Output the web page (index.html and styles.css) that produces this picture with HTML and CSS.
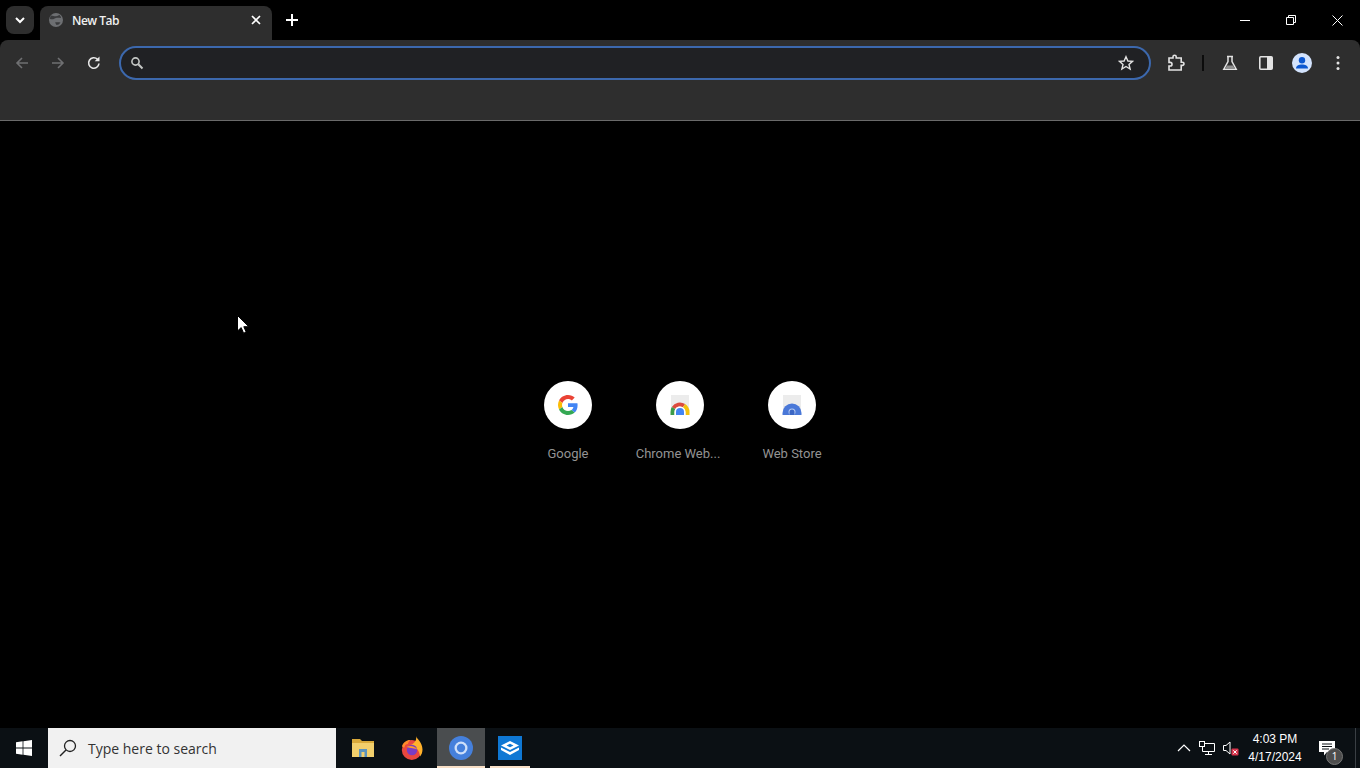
FILE: index.html
```html
<!DOCTYPE html>
<html lang="en">

<head>
  <meta charset="UTF-8">
  <title>New Tab</title>
  <link rel="stylesheet" href="styles.css">
</head>

<body>
  <!-- tab strip -->
  <div class="tabstrip">
    <button class="tab-search">
      <svg width="12" height="12" viewBox="0 0 12 12"><path d="M2 4l4 4 4-4" fill="none" stroke="#fff" stroke-width="2"/></svg>
    </button>
    <div class="tab">
      <svg class="tab-icon" width="16" height="16" viewBox="0 0 16 16">
        <circle cx="8" cy="8" r="7" fill="#6d6f72"/>
        <path d="M3 3.500c2 .2 3.500 1 5 .8s2.500-1 3.500-1.300c1 .8 1.500 2 1.500 3-2 0-3.500-.5-5 0S5 8 2 7c0-1.500.3-2.500 1-3.500zM7 10.500c1.500-.5 3.500-.5 5.500 0-1 1.700-2.500 2.500-4 2.500-.5-1-1-1.700-1.500-2.500z" fill="#3a3b3d"/>
      </svg>
      <span class="tab-title">New Tab</span>
      <svg class="tab-close" width="10" height="10" viewBox="0 0 10 10"><path d="M1 1l8 8M9 1L1 9" stroke="#fff" stroke-width="1.700"/></svg>
    </div>
    <button class="new-tab">
      <svg width="12" height="12" viewBox="0 0 12 12"><path d="M6 0v12M0 6h12" stroke="#fff" stroke-width="2"/></svg>
    </button>
    <div class="window-controls">
      <div class="win-btn"><svg width="10" height="10" viewBox="0 0 10 10"><path d="M0 5.500h10" stroke="#fff"/></svg></div>
      <div class="win-btn"><svg width="10" height="10" viewBox="0 0 10 10"><path d="M.5 2.500h7v7h-7zM2.500 2.500V.5h7v7h-2" fill="none" stroke="#fff"/></svg></div>
      <div class="win-btn"><svg width="11" height="11" viewBox="0 0 11 11"><path d="M.5.5l10 10M10.500.5l-10 10" stroke="#fff"/></svg></div>
    </div>
  </div>

  <!-- toolbar -->
  <div class="toolbar">
    <div class="toolbar-row">
      <div class="tool">
        <svg width="16" height="16" viewBox="0 0 16 16"><path d="M14 8H3M8 3L3 8l5 5" fill="none" stroke="#6f7072" stroke-width="1.600"/></svg>
      </div>
      <div class="tool">
        <svg width="16" height="16" viewBox="0 0 16 16"><path d="M2 8h11M8 3l5 5-5 5" fill="none" stroke="#6f7072" stroke-width="1.600"/></svg>
      </div>
      <div class="tool">
        <svg width="16" height="16" viewBox="0 0 16 16"><path d="M13 8.500A5.200 5.200 0 1 1 11.500 4.300" fill="none" stroke="#e8e8e8" stroke-width="1.600"/><path d="M13.500 1.500v4.800H8.700z" fill="#e8e8e8"/></svg>
      </div>
      <div class="omnibox">
        <svg class="omni-search" width="14" height="14" viewBox="0 0 14 14"><circle cx="5.500" cy="5.500" r="3.600" fill="none" stroke="#c4c7c5" stroke-width="1.600"/><path d="M8.300 8.300l4.200 4.200" stroke="#c4c7c5" stroke-width="2"/></svg>
        <svg class="omni-star" width="16" height="16" viewBox="0 0 16 16"><path d="M8 1.700l1.900 4.300 4.600.4-3.500 3 1.100 4.600-4.100-2.500-4.100 2.500L5 9.400l-3.500-3 4.600-.4z" fill="none" stroke="#e3e3e3" stroke-width="1.400"/></svg>
      </div>
      <div class="tool tool-ext">
        <svg width="18" height="18" viewBox="0 0 18 18"><path d="M2 4h4V2.800a1.600 1.600 0 0 1 3.200 0V4h5v4.200h1.200a1.600 1.600 0 0 1 0 3.200h-1.200V16H2v-4h1.200a1.800 1.800 0 0 0 0-3.600H2z" fill="none" stroke="#e3e3e3" stroke-width="1.600"/></svg>
      </div>
      <div class="tool-divider"></div>
      <div class="tool tool-flask">
        <svg width="16" height="16" viewBox="0 0 16 16"><path d="M5 1.500h6M6 1.500v5L1.800 14.200h12.400L10 6.500v-5" fill="none" stroke="#e3e3e3" stroke-width="1.500"/><path d="M5 10.500h6l2 3.500H3z" fill="#8f8f8f"/></svg>
      </div>
      <div class="tool">
        <svg width="16" height="16" viewBox="0 0 16 16"><rect x="1.800" y="1.800" width="12.400" height="12.400" rx="1" fill="none" stroke="#e3e3e3" stroke-width="1.600"/><rect x="9" y="2" width="5" height="12" fill="#e3e3e3"/></svg>
      </div>
      <div class="tool">
        <svg width="20" height="20" viewBox="0 0 20 20"><circle cx="10" cy="10" r="10" fill="#d3e3fd"/><circle cx="10" cy="7.300" r="3.200" fill="#0b57d0"/><path d="M4 15.500c0-2.700 2.700-4 6-4s6 1.300 6 4z" fill="#0b57d0"/></svg>
      </div>
      <div class="tool">
        <svg width="4" height="16" viewBox="0 0 4 16"><circle cx="2" cy="2.500" r="1.500" fill="#e3e3e3"/><circle cx="2" cy="8" r="1.500" fill="#e3e3e3"/><circle cx="2" cy="13.500" r="1.500" fill="#e3e3e3"/></svg>
      </div>
    </div>
  </div>

  <!-- new tab page -->
  <div class="page">
    <div class="shortcuts">
      <div class="shortcut">
        <div class="shortcut-icon">
          <svg width="20" height="20" viewBox="0 0 48 48">
            <path fill="#EA4335" d="M24 9.500c3.500 0 6.700 1.200 9.200 3.600l6.900-6.900C35.900 2.400 30.500 0 24 0 14.600 0 6.500 5.400 2.600 13.200l8 6.200C12.500 13.700 17.800 9.500 24 9.500z"/>
            <path fill="#4285F4" d="M47 24.500c0-1.600-.1-3.100-.4-4.500H24v9h12.900c-.6 3-2.200 5.500-4.700 7.200l7.700 6C44.400 38 47 31.900 47 24.500z"/>
            <path fill="#FBBC05" d="M10.500 28.600c-.5-1.400-.8-3-.8-4.600s.3-3.200.8-4.600l-8-6.200C1 16.400 0 20.100 0 24s1 7.600 2.600 10.800z"/>
            <path fill="#34A853" d="M24 48c6.500 0 11.900-2.100 15.900-5.800l-7.700-6c-2.200 1.500-5 2.300-8.200 2.300-6.300 0-11.500-4.200-13.500-9.900l-8 6.200C6.500 42.600 14.600 48 24 48z"/>
          </svg>
        </div>
        <span class="shortcut-label">Google</span>
      </div>
      <div class="shortcut">
        <div class="shortcut-icon">
          <svg width="20" height="20" viewBox="0 0 20 20">
            <rect x="1" y="0" width="18" height="20" fill="#ececec"/>
            <g fill="none" stroke-width="4">
              <path d="M3.500 13A7.500 7.500 0 0 1 14 10.700" stroke="#dd4b3e"/>
              <path d="M14 10.700A7.500 7.500 0 0 1 17.500 17v3" stroke="#f4c20d"/>
              <path d="M2.500 20v-3a7.500 7.500 0 0 1 1-4" stroke="#3c9b4a"/>
            </g>
            <path d="M4.500 20v-3a5.500 5.500 0 0 1 11 0v3z" fill="#fff"/>
            <path d="M6 20v-3a4 4 0 0 1 8 0v3z" fill="#4285f4"/>
          </svg>
        </div>
        <span class="shortcut-label shortcut-label-cut">Chrome Web...</span>
      </div>
      <div class="shortcut">
        <div class="shortcut-icon">
          <svg width="20" height="20" viewBox="0 0 20 20">
            <rect x="1" y="0" width="18" height="20" fill="#ececec"/>
            <path d="M.5 20v-2a9.500 9.500 0 0 1 19 0v2z" fill="#4a78d8"/>
            <circle cx="10" cy="17" r="3.500" fill="#b9cdf3"/>
            <path d="M7.500 20v-3a2.500 2.500 0 0 1 5 0v3z" fill="#3b66c4"/>
          </svg>
        </div>
        <span class="shortcut-label">Web Store</span>
      </div>
    </div>

    <svg class="cursor" width="12" height="19" viewBox="0 0 12 19"><path d="M.5.500v15.500l3.700-3.400 2.400 5.600 2.600-1.100-2.400-5.400h5z" fill="#fff" stroke="#000"/></svg>
  </div>

  <!-- windows taskbar -->
  <div class="taskbar">
    <div class="start">
      <svg width="16" height="16" viewBox="0 0 16 16"><path d="M0 2.200l6.600-.9v6.300H0zM7.400 1.200L16 0v7.600H7.400zM0 8.400h6.600v6.300L0 13.800zM7.400 8.400H16V16l-8.600-1.200z" fill="#fff"/></svg>
    </div>
    <div class="searchbox">
      <svg width="18" height="18" viewBox="0 0 18 18"><circle cx="11" cy="7" r="5.500" fill="none" stroke="#222" stroke-width="1.300"/><path d="M7 11l-6 6" stroke="#222" stroke-width="1.500"/></svg>
      <span>Type here to search</span>
    </div>
    <div class="apps">
      <div class="app">
        <svg width="22" height="20" viewBox="0 0 22 20"><path d="M0 1h8l2 2h12v15H0z" fill="#d9a93a"/><path d="M0 5h22v14H0z" fill="#f2cf6c"/><path d="M7 11h8v8H7z" fill="#5b93bd"/><path d="M9.500 14h3v5h-3z" fill="#f2cf6c"/></svg>
      </div>
      <div class="app">
        <svg width="24" height="24" viewBox="0 0 24 24">
          <circle cx="11.800" cy="14" r="10" fill="#e9473f"/>
          <path d="M16 0c.5 3 6.500 6 6.500 13.500 0 3-1 5-2.500 7-.5-6-4-10.500-9.500-11.500 3.500-1.500 6.500-4 5.500-9z" fill="#ffb12b"/>
          <path d="M2 10c1.500-4 5-6.500 9-6-2 1-3 2.500-3 4-2 0-3.500 1-3.500 3.500C3.500 11.500 2.500 11 2 10z" fill="#ff8a2a"/>
          <circle cx="12" cy="14" r="5.200" fill="#7a3cc4"/>
          <path d="M6.500 11c3.500-2 8.500-1 11 2.500-2.500-1.200-7-1.200-11-2.500z" fill="#ff9a2a"/>
        </svg>
      </div>
      <div class="app app-active">
        <svg width="24" height="24" viewBox="0 0 24 24"><circle cx="12" cy="12" r="12" fill="#4580dc"/><circle cx="12" cy="12" r="6.500" fill="#cfe0fa"/><circle cx="12" cy="12" r="4.200" fill="#4580dc"/></svg>
      </div>
      <div class="app app-open">
        <div class="store-tile">
          <svg width="18" height="14" viewBox="0 0 18 14"><path d="M9 0l9 4.500L9 9 0 4.500z" fill="#fff"/><path d="M0 6.500l9 4.500 9-4.500V9l-9 5-9-5z" fill="#fff"/><path d="M5.500 4.500L9 2.800l3.500 1.700L9 6.200z" fill="#0f78d4"/></svg>
        </div>
      </div>
    </div>
    <div class="tray">
      <svg width="14" height="8" viewBox="0 0 14 8"><path d="M1 7l6-6 6 6" fill="none" stroke="#fff" stroke-width="1.200"/></svg>
      <svg width="16" height="14" viewBox="0 0 16 14"><path d="M3.500 2.500h12v8h-12zM6 13.500h7M9.500 10.500v3" fill="none" stroke="#fff"/><rect x=".5" y=".5" width="5" height="5" fill="#0b1014" stroke="#fff"/></svg>
      <svg width="16" height="16" viewBox="0 0 16 16"><path d="M.5 5.500h2.500L7 2v12l-4-3.500H.5z" fill="none" stroke="#fff"/><rect x="8.500" y="8.500" width="7" height="7" rx="1" fill="#d8344c"/><path d="M10.300 10.300l3.400 3.400M13.700 10.300l-3.400 3.400" stroke="#fff"/></svg>
      <div class="clock">
        <span>4:03 PM</span>
        <span>4/17/2024</span>
      </div>
      <div class="notify">
        <svg width="16" height="15" viewBox="0 0 16 15"><path d="M0 0h16v11H8l-3 3.500V11H0z" fill="#fff"/><path d="M3 3h10M3 5.500h10M3 8h7" stroke="#0b1014"/></svg>
        <span class="notify-badge">1</span>
      </div>
      <div class="show-desktop"></div>
    </div>
  </div>
</body>

</html>
```

FILE: styles.css
```css
* {
  margin: 0;
  padding: 0;
  box-sizing: border-box;
}

body {
  display: flex;
  flex-direction: column;
  width: 1360px;
  height: 768px;
  overflow: hidden;
  background-color: #000;
  font-family: "Open Sans", "Liberation Sans", sans-serif;
}

button {
  border: none;
  background: none;
}

/* tab strip */
.tabstrip {
  display: flex;
  align-items: flex-end;
  height: 40px;
  padding-left: 6px;
  background-color: #000;
}

.tab-search {
  display: flex;
  align-items: center;
  justify-content: center;
  width: 28px;
  height: 28px;
  margin-bottom: 6px;
  border-radius: 8px;
  background-color: #2e2e2e;
}

.tab {
  display: flex;
  align-items: center;
  width: 232px;
  height: 34px;
  margin-left: 6px;
  padding: 0 11px 6px 8px;
  border-radius: 8px 8px 0 0;
  background-color: #2e2e2e;
}

.tab-title {
  flex: 1;
  margin-left: 8px;
  color: #f0f0f0;
  font-size: 12px;
  font-weight: 600;
  letter-spacing: -0.5px;
}

.new-tab {
  display: flex;
  align-items: center;
  justify-content: center;
  width: 28px;
  height: 28px;
  margin-bottom: 6px;
  margin-left: 6px;
}

.window-controls {
  display: flex;
  align-self: flex-start;
  margin-left: auto;
}

.win-btn {
  display: flex;
  align-items: center;
  justify-content: center;
  width: 46px;
  height: 40px;
}

/* toolbar */
.toolbar {
  height: 81px;
  border-bottom: 1px solid #6a6a6a;
  border-radius: 8px 8px 0 0;
  background-color: #2e2e2e;
}

.toolbar-row {
  display: flex;
  align-items: center;
  height: 46px;
  padding-left: 4px;
}

.tool {
  display: flex;
  align-items: center;
  justify-content: center;
  flex: none;
  width: 36px;
  height: 34px;
}

.omnibox {
  display: flex;
  align-items: center;
  justify-content: space-between;
  width: 1032px;
  height: 34px;
  margin-left: 7px;
  padding: 0 15px 0 9px;
  border: 2px solid #3c68ad;
  border-radius: 17px;
  background-color: #202124;
}

.tool-ext {
  margin-left: 7px;
}

.tool-divider {
  flex: none;
  width: 2px;
  height: 16px;
  margin-left: 8px;
  background-color: #0c0c0c;
}

.tool-flask {
  margin-left: 8px;
}

/* new tab page */
.page {
  position: relative;
  flex: 1;
  padding-top: 260px;
  background-color: #000;
}

.shortcuts {
  display: flex;
  justify-content: center;
}

.shortcut {
  display: flex;
  flex-direction: column;
  align-items: center;
  width: 112px;
}

.shortcut-icon {
  display: flex;
  align-items: center;
  justify-content: center;
  width: 48px;
  height: 48px;
  border-radius: 50%;
  background-color: #fff;
}

.shortcut-label {
  margin-top: 16px;
  color: #939393;
  font-family: Roboto, "Liberation Sans", sans-serif;
  font-size: 13px;
  line-height: 17px;
}

.shortcut-label-cut {
  margin-right: 4px;
}

.cursor {
  position: absolute;
  top: 194px;
  left: 237px;
}

/* taskbar */
.taskbar {
  display: flex;
  flex: none;
  align-items: stretch;
  height: 40px;
  background-color: #0b1014;
}

.start {
  display: flex;
  align-items: center;
  justify-content: center;
  width: 48px;
}

.searchbox {
  display: flex;
  align-items: center;
  width: 288px;
  padding-left: 11px;
  background-color: #f1f1f1;
  color: #333;
  font-size: 14px;
}

.searchbox span {
  margin-left: 11px;
}

.apps {
  display: flex;
  gap: 1px;
  margin-left: 3px;
}

.app {
  position: relative;
  display: flex;
  align-items: center;
  justify-content: center;
  width: 48px;
}

.app-active {
  background-color: #4a4d4f;
}

.app-active::after,
.app-open::after {
  content: "";
  position: absolute;
  bottom: 0;
  height: 2px;
  background-color: #f8dfc6;
}

.app-active::after {
  left: 0;
  right: 0;
}

.app-open::after {
  left: 4px;
  right: 4px;
}

.store-tile {
  display: flex;
  align-items: center;
  justify-content: center;
  width: 24px;
  height: 24px;
  background-color: #0f78d4;
}

.tray {
  display: flex;
  align-items: center;
  gap: 8px;
  margin-left: auto;
  color: #fff;
}

.clock {
  display: flex;
  flex-direction: column;
  align-items: center;
  width: 56px;
  font-family: "Liberation Sans", sans-serif;
  font-size: 12px;
  line-height: 18px;
}

.notify {
  position: relative;
  display: flex;
  align-items: center;
  width: 24px;
  margin-left: 8px;
}

.notify-badge {
  position: absolute;
  top: 7px;
  left: 7px;
  width: 17px;
  height: 17px;
  border: 1px solid #777;
  border-radius: 50%;
  background-color: #4d4d4d;
  font-size: 10px;
  line-height: 15px;
  text-align: center;
}

.show-desktop {
  width: 1px;
  height: 40px;
  margin-left: 4px;
  margin-right: 4px;
  background-color: #3a3f44;
}
```
